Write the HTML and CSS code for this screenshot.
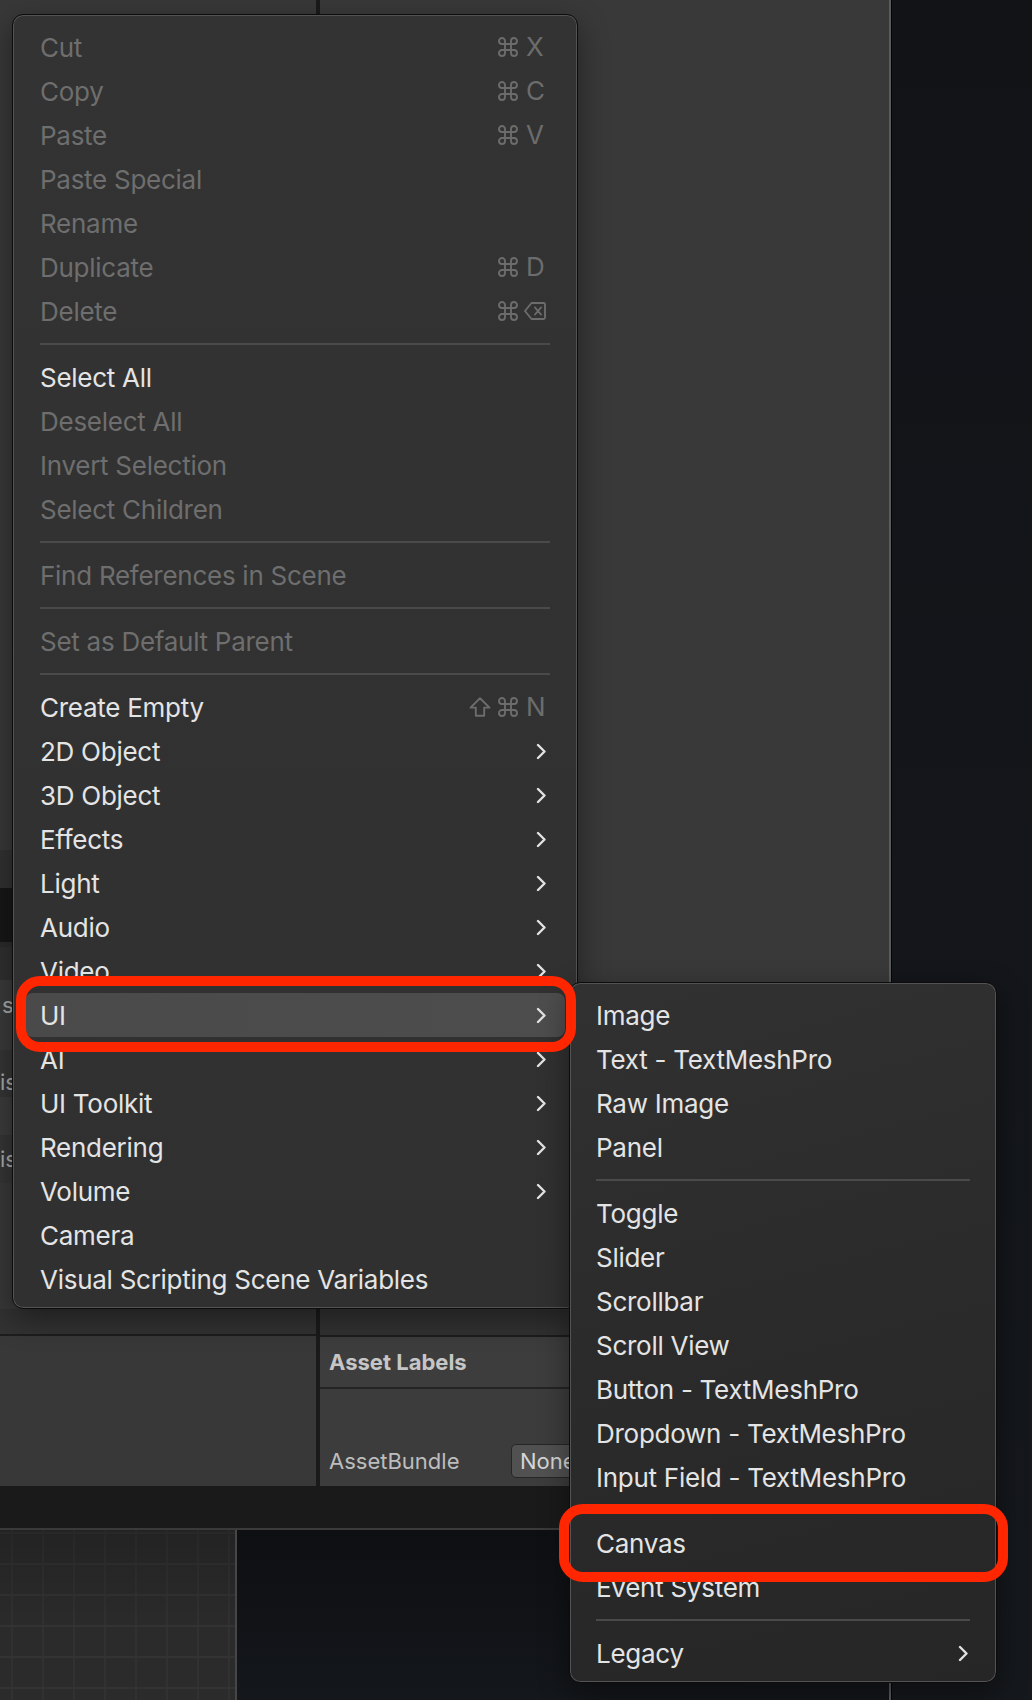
FILE: index.html
```html
<!DOCTYPE html>
<html lang="en">
<head>
<meta charset="utf-8">
<title>Unity context menu</title>
<link rel="stylesheet" href="styles.css">
</head>
<body>
<div class="editor">
  <div class="left">
    <div class="panels">
      <div class="hier">
        <div class="h-top"></div>
        <div class="h-b"></div>
        <div class="h-tab"></div>
        <div class="h-l1"></div>
        <div class="h-c"></div>
        <div class="h-r1"><span class="ht">s</span></div>
        <div class="h-r2"><span class="ht">is</span></div>
        <div class="h-r3"></div>
        <div class="h-r4"><span class="ht">is</span></div>
        <div class="h-rest"></div>
        <div class="p-bar"></div>
        <div class="p-line"></div>
        <div class="p-body"></div>
      </div>
      <div class="vdiv"></div>
      <div class="insp">
        <div class="i-top"></div>
        <div class="p-bar"></div>
        <div class="p-line"></div>
        <div class="i-head">Asset Labels</div>
        <div class="p-line2"></div>
        <div class="i-body">
          <div class="i-row">
            <span class="i-label">AssetBundle</span>
            <span class="i-drop">None</span>
          </div>
        </div>
      </div>
    </div>
    <div class="band"></div>
    <div class="bottom">
      <div class="scene"></div>
      <div class="vline"></div>
      <div class="dark"></div>
    </div>
  </div>
  <div class="edge"></div>
  <div class="game"></div>
</div>

<div class="menu main-menu">
  <div class="item dis"><span class="label">Cut</span><span class="sc"><span class="mods"><svg class="cmd" viewBox="0 0 20 20"><path d="M7,7 V4 A3,3 0 1 0 4,7 H16 A3,3 0 1 0 13,4 V16 A3,3 0 1 0 16,13 H4 A3,3 0 1 0 7,16 Z"/></svg></span><span class="key">X</span></span></div>
  <div class="item dis"><span class="label">Copy</span><span class="sc"><span class="mods"><svg class="cmd" viewBox="0 0 20 20"><path d="M7,7 V4 A3,3 0 1 0 4,7 H16 A3,3 0 1 0 13,4 V16 A3,3 0 1 0 16,13 H4 A3,3 0 1 0 7,16 Z"/></svg></span><span class="key">C</span></span></div>
  <div class="item dis"><span class="label">Paste</span><span class="sc"><span class="mods"><svg class="cmd" viewBox="0 0 20 20"><path d="M7,7 V4 A3,3 0 1 0 4,7 H16 A3,3 0 1 0 13,4 V16 A3,3 0 1 0 16,13 H4 A3,3 0 1 0 7,16 Z"/></svg></span><span class="key">V</span></span></div>
  <div class="item dis"><span class="label">Paste Special</span></div>
  <div class="item dis"><span class="label">Rename</span></div>
  <div class="item dis"><span class="label">Duplicate</span><span class="sc"><span class="mods"><svg class="cmd" viewBox="0 0 20 20"><path d="M7,7 V4 A3,3 0 1 0 4,7 H16 A3,3 0 1 0 13,4 V16 A3,3 0 1 0 16,13 H4 A3,3 0 1 0 7,16 Z"/></svg></span><span class="key">D</span></span></div>
  <div class="item dis"><span class="label">Delete</span><span class="sc"><span class="mods"><svg class="cmd" viewBox="0 0 20 20"><path d="M7,7 V4 A3,3 0 1 0 4,7 H16 A3,3 0 1 0 13,4 V16 A3,3 0 1 0 16,13 H4 A3,3 0 1 0 7,16 Z"/></svg></span><span class="key key-del"><svg class="del" viewBox="0 0 22 18"><path d="M7.5,1 H19.5 Q21,1 21,2.5 V15.5 Q21,17 19.5,17 H7.5 L1,9 Z M11,5.5 L17,12.5 M17,5.5 L11,12.5"/></svg></span></span></div>
  <div class="sep"></div>
  <div class="item"><span class="label">Select All</span></div>
  <div class="item dis"><span class="label">Deselect All</span></div>
  <div class="item dis"><span class="label">Invert Selection</span></div>
  <div class="item dis"><span class="label">Select Children</span></div>
  <div class="sep"></div>
  <div class="item dis"><span class="label">Find References in Scene</span></div>
  <div class="sep"></div>
  <div class="item dis"><span class="label">Set as Default Parent</span></div>
  <div class="sep"></div>
  <div class="item"><span class="label">Create Empty</span><span class="sc"><span class="mods"><svg class="shift" viewBox="0 0 22 20"><path d="M11,1.2 L20.5,10.6 H15.2 V18.8 H6.8 V10.6 H1.5 Z"/></svg><svg class="cmd" viewBox="0 0 20 20"><path d="M7,7 V4 A3,3 0 1 0 4,7 H16 A3,3 0 1 0 13,4 V16 A3,3 0 1 0 16,13 H4 A3,3 0 1 0 7,16 Z"/></svg></span><span class="key">N</span></span></div>
  <div class="item"><span class="label">2D Object</span><svg class="chev" viewBox="0 0 10 17"><path d="M2,2 L8.5,8.5 L2,15"/></svg></div>
  <div class="item"><span class="label">3D Object</span><svg class="chev" viewBox="0 0 10 17"><path d="M2,2 L8.5,8.5 L2,15"/></svg></div>
  <div class="item"><span class="label">Effects</span><svg class="chev" viewBox="0 0 10 17"><path d="M2,2 L8.5,8.5 L2,15"/></svg></div>
  <div class="item"><span class="label">Light</span><svg class="chev" viewBox="0 0 10 17"><path d="M2,2 L8.5,8.5 L2,15"/></svg></div>
  <div class="item"><span class="label">Audio</span><svg class="chev" viewBox="0 0 10 17"><path d="M2,2 L8.5,8.5 L2,15"/></svg></div>
  <div class="item"><span class="label">Video</span><svg class="chev" viewBox="0 0 10 17"><path d="M2,2 L8.5,8.5 L2,15"/></svg></div>
  <div class="item hl"><span class="label">UI</span><svg class="chev" viewBox="0 0 10 17"><path d="M2,2 L8.5,8.5 L2,15"/></svg></div>
  <div class="item"><span class="label">AI</span><svg class="chev" viewBox="0 0 10 17"><path d="M2,2 L8.5,8.5 L2,15"/></svg></div>
  <div class="item"><span class="label">UI Toolkit</span><svg class="chev" viewBox="0 0 10 17"><path d="M2,2 L8.5,8.5 L2,15"/></svg></div>
  <div class="item"><span class="label">Rendering</span><svg class="chev" viewBox="0 0 10 17"><path d="M2,2 L8.5,8.5 L2,15"/></svg></div>
  <div class="item"><span class="label">Volume</span><svg class="chev" viewBox="0 0 10 17"><path d="M2,2 L8.5,8.5 L2,15"/></svg></div>
  <div class="item"><span class="label">Camera</span></div>
  <div class="item"><span class="label">Visual Scripting Scene Variables</span></div>
</div>

<div class="menu sub-menu">
  <div class="item"><span class="label">Image</span></div>
  <div class="item"><span class="label">Text - TextMeshPro</span></div>
  <div class="item"><span class="label">Raw Image</span></div>
  <div class="item"><span class="label">Panel</span></div>
  <div class="sep"></div>
  <div class="item"><span class="label">Toggle</span></div>
  <div class="item"><span class="label">Slider</span></div>
  <div class="item"><span class="label">Scrollbar</span></div>
  <div class="item"><span class="label">Scroll View</span></div>
  <div class="item"><span class="label">Button - TextMeshPro</span></div>
  <div class="item"><span class="label">Dropdown - TextMeshPro</span></div>
  <div class="item"><span class="label">Input Field - TextMeshPro</span></div>
  <div class="sep"></div>
  <div class="item"><span class="label">Canvas</span></div>
  <div class="item"><span class="label">Event System</span></div>
  <div class="sep"></div>
  <div class="item"><span class="label">Legacy</span><svg class="chev" viewBox="0 0 10 17"><path d="M2,2 L8.5,8.5 L2,15"/></svg></div>
</div>

<div class="mark mark-ui"></div>
<div class="mark mark-canvas"></div>
</body>
</html>
```

FILE: styles.css
```css
html, body {
  margin: 0;
  padding: 0;
}
body {
  width: 1032px;
  height: 1700px;
  overflow: hidden;
  position: relative;
  background: #121418;
  font-family: Inter, "Noto Sans", "Liberation Sans", sans-serif;
}

/* ---------- editor background ---------- */
.editor {
  display: flex;
  height: 1700px;
}
.left {
  width: 889px;
  display: flex;
  flex-direction: column;
}
.edge {
  width: 3px;
  background: linear-gradient(90deg, #5b5b5b 0 2px, #050505 2px);
}
.game {
  flex: 1;
  background: linear-gradient(180deg, #111317, #15181c);
}
.panels {
  height: 1486px;
  display: flex;
}
.hier {
  width: 316px;
  display: flex;
  flex-direction: column;
  background: #383838;
}
.vdiv {
  width: 4px;
  background: #1a1a1a;
}
.insp {
  flex: 1;
  display: flex;
  flex-direction: column;
  background: #393939;
}

.h-top { height: 850px; background: #383838; }
.h-b { height: 38px; background: #313131; }
.h-tab { height: 54px; background: #171717; }
.h-l1 { height: 5px; background: #2b2b2b; }
.h-c { height: 33px; background: #303030; }
.h-r1, .h-r2, .h-r3, .h-r4 {
  display: flex;
  align-items: center;
  color: #a9a9a9;
  font-size: 22px;
}
.h-r1 { height: 50px; background: #3a3a3a; padding-bottom: 20px; }
.h-r2 { height: 47px; background: #353535; padding-top: 17px; box-sizing: border-box; }
.h-r3 { height: 38px; background: #3b3b3b; }
.h-r4 { height: 48px; background: #353535; }
.h-r1 .ht { padding-left: 2px; }
.h-rest { flex: 1; background: #383838; }

.p-bar { height: 25px; background: #323232; }
.p-line { height: 2px; background: #1d1d1d; }
.p-line2 { height: 2px; background: #242424; }
.p-body { height: 150px; background: #383838; }
.i-top { flex: 1; background: #393939; }
.i-head {
  height: 50px;
  display: flex;
  align-items: center;
  padding-left: 9px;
  background: #3d3d3d;
  color: #c6c6c6;
  font-size: 22px;
  font-weight: 700;
}
.i-body {
  height: 97px;
  background: #3c3c3c;
  box-sizing: border-box;
  padding: 55px 0 0 9px;
}
.i-row {
  display: flex;
  align-items: center;
  height: 34px;
}
.i-label {
  width: 182px;
  color: #bdbdbd;
  font-size: 22px;
}
.i-drop {
  height: 34px;
  width: 160px;
  box-sizing: border-box;
  display: flex;
  align-items: center;
  padding-left: 8px;
  background: #515151;
  border: 1px solid #262626;
  border-radius: 5px;
  color: #d6d6d6;
  font-size: 22px;
}

.band {
  height: 42px;
  background: #1a1a1a;
  border-bottom: 2px solid #3a3a3a;
}
.bottom {
  flex: 1;
  display: flex;
}
.scene {
  width: 235px;
  background-color: #2b2b2b;
  background-image:
    linear-gradient(180deg, rgba(20,20,20,0.35), rgba(20,20,20,0) 60%),
    linear-gradient(180deg, #333333 2px, transparent 2px),
    linear-gradient(90deg, #313131 2px, transparent 2px);
  background-size: 100% 100%, 31px 31px, 31px 31px;
  background-position: 0 0, 0 2px, 11px 0;
}
.vline {
  width: 2px;
  background: #464646;
}
.dark {
  flex: 1;
  background: linear-gradient(180deg, #0d0f12, #14171b);
}

/* ---------- menus ---------- */
.menu {
  position: absolute;
  box-sizing: border-box;
  border: 1px solid #0c0c0c;
  border-radius: 11px;
  box-shadow: inset 0 0 0 1px #535353, 0 10px 30px rgba(0, 0, 0, 0.4);
}
.main-menu {
  left: 12px;
  top: 14px;
  width: 566px;
  padding: 10px 0 7px;
  background: linear-gradient(180deg, #333333, #303030);
}
.sub-menu {
  left: 569px;
  top: 982px;
  width: 428px;
  padding: 10px 0 7px;
  background: linear-gradient(165deg, #313131 0%, #2b2b2b 45%, #262626 100%);
}
.item {
  height: 44px;
  display: flex;
  align-items: center;
  margin: 0 12px;
  padding: 0 19px 0 15px;
  border-radius: 8px;
  color: #e4e4e4;
  font-size: 26px;
  letter-spacing: -0.27px;
  white-space: nowrap;
}
.sub-menu .item {
  padding: 0 16px 0 14px;
}
.item.dis {
  color: #6e6e6e;
}
.item.hl {
  background: linear-gradient(90deg, #4a4a4a, #4d4d4d);
}
.label {
  flex: 1;
}
.sc {
  display: flex;
  align-items: center;
  gap: 8px;
  color: #6c6c6c;
  letter-spacing: 0;
}
.mods {
  display: flex;
  align-items: center;
  gap: 7px;
}
.key {
  width: 20px;
  display: flex;
  align-items: center;
  line-height: 1;
}
.key-del {
  margin-left: -2px;
  width: 22px;
}
.cmd {
  width: 20px;
  height: 20px;
  fill: none;
  stroke: #6c6c6c;
  stroke-width: 1.9;
}
.shift {
  width: 22px;
  height: 20px;
  fill: none;
  stroke: #6c6c6c;
  stroke-width: 1.9;
  stroke-linejoin: round;
}
.del {
  width: 22px;
  height: 18px;
  fill: none;
  stroke: #6c6c6c;
  stroke-width: 1.9;
  stroke-linejoin: round;
  stroke-linecap: round;
}
.chev {
  width: 10px;
  height: 17px;
  flex-shrink: 0;
  fill: none;
  stroke: #e2e2e2;
  stroke-width: 2.4;
  stroke-linecap: round;
  stroke-linejoin: round;
}
.sep {
  height: 22px;
  display: flex;
  align-items: center;
  margin: 0 27px;
}
.sub-menu .sep {
  margin: 0 26px;
}
.sep::before {
  content: "";
  flex: 1;
  height: 2px;
  background: #4a4a4a;
}

/* ---------- annotation boxes ---------- */
.mark {
  position: absolute;
  box-sizing: border-box;
  border: 10px solid #ff2600;
  border-radius: 24px;
}
.mark-ui {
  left: 16px;
  top: 976px;
  width: 560px;
  height: 76px;
}
.mark-canvas {
  left: 559px;
  top: 1504px;
  width: 449px;
  height: 78px;
}
```
